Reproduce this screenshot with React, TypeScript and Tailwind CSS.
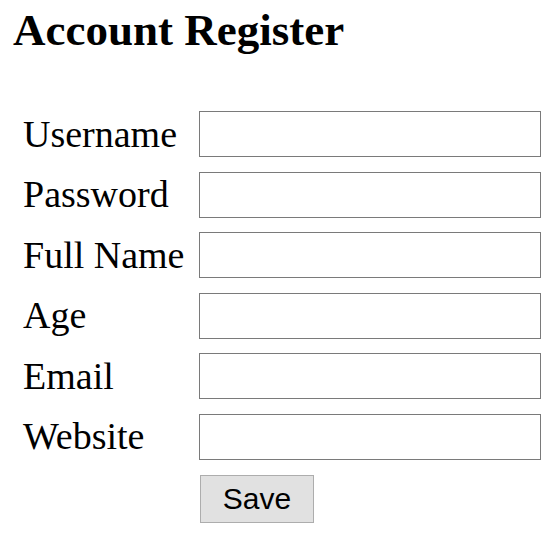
export default function App() {
  const fields = ["Username", "Password", "Full Name", "Age", "Email", "Website"];

  return (
    <div className="min-h-screen bg-white text-black">
      <h1
        className="pl-[13px] pt-[8px] text-[45px] font-bold leading-none"
        style={{ fontFamily: '"Liberation Serif", "Times New Roman", serif' }}
      >
        Account Register
      </h1>

      <form className="mt-[58px] pl-[23px]">
        <div className="grid grid-cols-[176px_342px] gap-y-[14.5px]">
          {fields.map((label) => (
            <div key={label} className="contents">
              <label
                className="flex h-[46px] items-center text-[38px] leading-[45px] text-black"
                style={{ fontFamily: '"Liberation Serif", "Times New Roman", serif' }}
              >
                {label}
              </label>
              <input
                type="text"
                className="h-[46px] w-[342px] border border-[#7a7a7a] bg-white px-1 outline-none"
              />
            </div>
          ))}
          <div />
          <div className="pt-px">
            <button
              type="button"
              className="ml-px h-[48px] w-[114px] border border-[#adadad] bg-[#e1e1e1] text-[30px] leading-none text-black"
              style={{ fontFamily: '"Liberation Sans", Arial, sans-serif' }}
            >
              Save
            </button>
          </div>
        </div>
      </form>
    </div>
  );
}
